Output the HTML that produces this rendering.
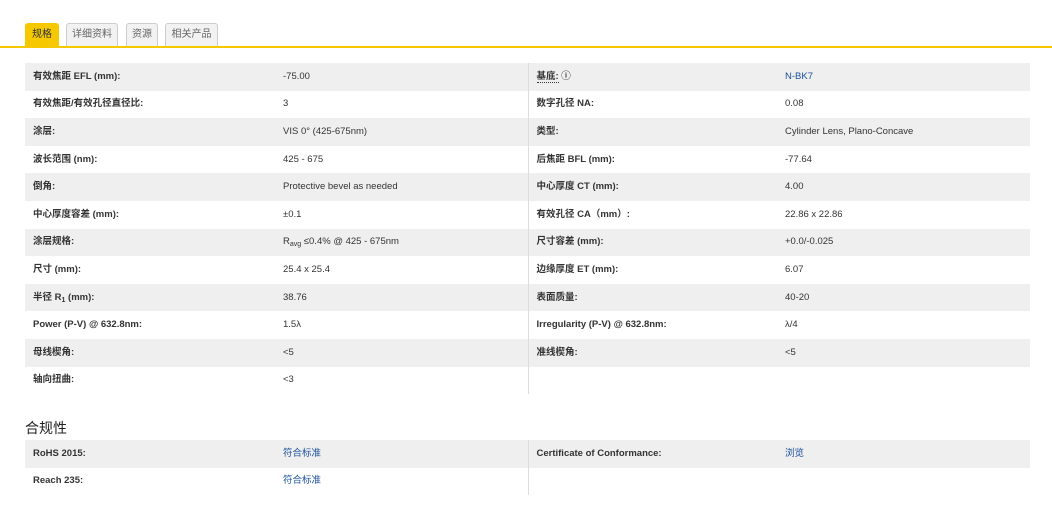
<!DOCTYPE html>
<html><head><meta charset="utf-8"><style>
*{margin:0;padding:0;box-sizing:border-box}
body{width:1052px;height:522px;background:#fff;font-family:"Liberation Sans","Noto Sans CJK SC",sans-serif;font-size:9.5px;color:#333;position:relative;overflow:hidden}
.tabs{position:absolute;left:0;top:0;width:1052px;height:48px;border-bottom:2px solid #f5c800}
.tab{position:absolute;top:23px;height:23px;border:1px solid #ccc;border-bottom:none;background:#f2f2f2;color:#666;font-size:10px;line-height:22px;text-align:center;border-radius:3px 3px 0 0}
.tab.on{background:#f5c800;border-color:#f5c800;color:#333}
table{position:absolute;left:25px;width:1005px;border-collapse:collapse;table-layout:fixed}
td{height:27.6px;padding:0 8px;vertical-align:middle;line-height:12px;font-family:"Liberation Sans","Noto Sans CJK SC",sans-serif}
tr:nth-child(odd) td{background:#efefef}
td.l{font-weight:bold;color:#333}
td:nth-child(1){width:250px}td:nth-child(2){width:253px}td:nth-child(3){width:249px;border-left:1px solid #ddd}
a{color:#1a4f9c;text-decoration:none}
h3{position:absolute;left:25px;top:418px;font-size:14px;font-weight:normal;color:#222}
sub{font-size:7px;line-height:0;vertical-align:-2px}
</style></head><body>
<div class="tabs">
<div class="tab on" style="left:25px;width:34px">规格</div>
<div class="tab" style="left:66px;width:52px">详细资料</div>
<div class="tab" style="left:126px;width:32px">资源</div>
<div class="tab" style="left:165px;width:53px">相关产品</div>
</div>
<table style="top:63px">
<tr><td class="l"><span>有效焦距 EFL (mm):</span></td><td>-75.00</td><td class="l"><span style="border-bottom:1px dotted #333">基底:</span> ⓘ</td><td><a>N-BK7</a></td></tr>
<tr><td class="l">有效焦距/有效孔径直径比:</td><td>3</td><td class="l">数字孔径 NA:</td><td>0.08</td></tr>
<tr><td class="l">涂层:</td><td>VIS 0° (425-675nm)</td><td class="l">类型:</td><td>Cylinder Lens, Plano-Concave</td></tr>
<tr><td class="l">波长范围 (nm):</td><td>425 - 675</td><td class="l">后焦距 BFL (mm):</td><td>-77.64</td></tr>
<tr><td class="l">倒角:</td><td>Protective bevel as needed</td><td class="l">中心厚度 CT (mm):</td><td>4.00</td></tr>
<tr><td class="l">中心厚度容差 (mm):</td><td>±0.1</td><td class="l">有效孔径 CA（mm）:</td><td>22.86 x 22.86</td></tr>
<tr><td class="l">涂层规格:</td><td>R<sub>avg</sub> ≤0.4% @ 425 - 675nm</td><td class="l">尺寸容差 (mm):</td><td>+0.0/-0.025</td></tr>
<tr><td class="l">尺寸 (mm):</td><td>25.4 x 25.4</td><td class="l">边缘厚度 ET (mm):</td><td>6.07</td></tr>
<tr><td class="l">半径 R<sub>1</sub> (mm):</td><td>38.76</td><td class="l">表面质量:</td><td>40-20</td></tr>
<tr><td class="l">Power (P-V) @ 632.8nm:</td><td>1.5λ</td><td class="l">Irregularity (P-V) @ 632.8nm:</td><td>λ/4</td></tr>
<tr><td class="l">母线楔角:</td><td>&lt;5</td><td class="l">准线楔角:</td><td>&lt;5</td></tr>
<tr><td class="l">轴向扭曲:</td><td>&lt;3</td><td></td><td></td></tr>
</table>
<h3>合规性</h3>
<table style="top:440px">
<tr><td class="l">RoHS 2015:</td><td><a>符合标准</a></td><td class="l">Certificate of Conformance:</td><td><a>浏览</a></td></tr>
<tr><td class="l">Reach 235:</td><td><a>符合标准</a></td><td></td><td></td></tr>
</table>
</body></html>
